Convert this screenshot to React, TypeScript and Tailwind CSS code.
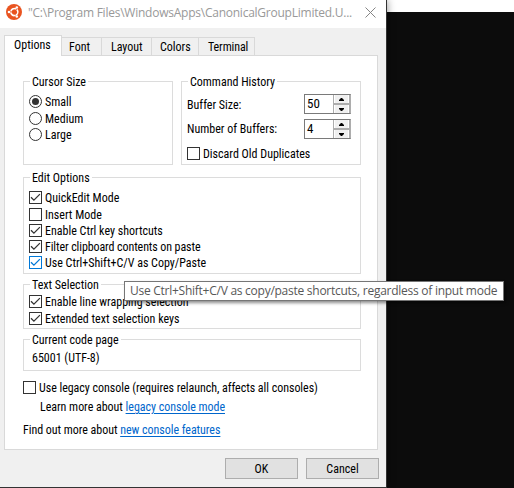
import React from "react";

function Box({ checked, active }: { checked?: boolean; active?: boolean }) {
  return (
    <span
      className={`flex h-[13px] w-[13px] shrink-0 items-center justify-center border bg-white ${
        active ? "border-[#0078d7] text-[#0078d7]" : "border-[#333333] text-[#333333]"
      }`}
    >
      {checked && (
        <svg width="11" height="11" viewBox="0 0 11 11" fill="none" stroke="currentColor" strokeWidth="1.3">
          <path d="M1 5.2 3.9 8.1 9.9 2.1" />
        </svg>
      )}
    </span>
  );
}

function Radio({ checked }: { checked?: boolean }) {
  return (
    <span className="flex h-[13px] w-[13px] shrink-0 items-center justify-center rounded-full border border-[#333333] bg-white">
      {checked && <span className="h-[7px] w-[7px] rounded-full bg-[#333333]" />}
    </span>
  );
}

function Row({ mark, label, className = "" }: { mark: React.ReactNode; label: string; className?: string }) {
  return (
    <div className={`flex h-[13px] items-center gap-[3px] ${className}`}>
      {mark}
      <span className="mt-[2px] whitespace-nowrap leading-[13px]">{label}</span>
    </div>
  );
}

function Group({ title, className, children }: { title: string; className: string; children: React.ReactNode }) {
  return (
    <section className={`flex flex-col border border-[#dcdcdc] pl-[5px] ${className}`}>
      <h2 className="-mt-[7px] mb-[5px] ml-[1px] h-[15px] self-start bg-white px-[2px] leading-[15px]">{title}</h2>
      {children}
    </section>
  );
}

function Spinner({ value }: { value: string }) {
  return (
    <div className="flex h-[20px] w-[47px] border border-[#7a7a7a] border-r-[#adadad] bg-white">
      <span className="flex-1 pl-[2px] text-[13px] leading-[18px]">{value}</span>
      <div className="flex w-[17px] flex-col gap-[2px] bg-[#adadad] px-px">
        <span className="flex flex-1 items-center justify-center border-x border-white bg-[#f0f0f0]">
          <svg width="5" height="3" viewBox="0 0 5 3"><path d="M0 3V2L2 0H3L5 2V3z" /></svg>
        </span>
        <span className="flex flex-1 items-center justify-center border-x border-white bg-[#f0f0f0]">
          <svg width="5" height="3" viewBox="0 0 5 3"><path d="M0 0V1L2 3H3L5 1V0z" /></svg>
        </span>
      </div>
    </div>
  );
}

function Tab({ label, className }: { label: string; className: string }) {
  return (
    <div className={`h-[18px] border-t border-r border-[#d9d9d9] bg-[#f0f0f0] leading-[18px] ${className}`}>{label}</div>
  );
}

export default function App() {
  return (
    <div className="relative h-[488px] w-[514px] overflow-hidden bg-white font-['Roboto_Condensed','Roboto',sans-serif] text-[12px] text-black">
      <div className="flex h-full">
        <main className="z-10 flex w-[387px] flex-col border-r border-b border-[#333333] bg-[#f0f0f0] shadow-[0_0_8px_rgba(0,0,0,0.45)]">
          <header className="flex h-[28px] shrink-0 items-center bg-white">
            <svg className="ml-[6px] -mt-[4px] shrink-0" width="16" height="16" viewBox="0 0 16 16">
              <circle cx="8" cy="8" r="8" fill="#e95420" />
              <circle cx="8.3" cy="8" r="3.5" fill="none" stroke="#fff" strokeWidth="1.6" strokeDasharray="6.33 1" strokeDashoffset="-0.5" transform="rotate(60 8.3 8)" />
              <circle cx="3" cy="8" r="1.3" fill="#fff" />
              <circle cx="10.8" cy="3.5" r="1.3" fill="#fff" />
              <circle cx="10.8" cy="12.5" r="1.3" fill="#fff" />
            </svg>
            <h1 className="-mt-[3px] ml-[6px] w-[331px] whitespace-nowrap font-['Open_Sans',sans-serif] text-[12px] tracking-[-0.24px] text-[#999999]">
              "C:\Program Files\WindowsApps\CanonicalGroupLimited.U...
            </h1>
            <svg className="-mt-[4px] ml-[6px] shrink-0" width="11" height="11" viewBox="0 0 11 11" stroke="#858585">
              <path d="M.5.5 10.5 10.5M10.5.5.5 10.5" />
            </svg>
          </header>

          <nav className="ml-[4px] mt-[7px] flex h-[20px] shrink-0 items-end">
            <div className="z-10 -mb-px h-[21px] w-[58px] self-start border border-b-0 border-[#d9d9d9] bg-white pl-[9px] leading-[19px]">Options</div>
            <Tab label="Font" className="w-[40px] pl-[7px]" />
            <Tab label="Layout" className="w-[50px] pl-[9px]" />
            <Tab label="Colors" className="w-[47px] pl-[8px]" />
            <Tab label="Terminal" className="w-[56px] pl-[9px] tracking-[-0.1px]" />
          </nav>

          <div className="ml-[4px] flex h-[395px] w-[374px] shrink-0 flex-col border border-[#d9d9d9] bg-white pl-[18px] pt-[25px]">
            <div className="flex gap-[8px]">
              <Group title="Cursor Size" className="h-[84px] w-[150px]">
                <Row mark={<Radio checked />} label="Small" />
                <Row mark={<Radio />} label="Medium" className="mt-[4px]" />
                <Row mark={<Radio />} label="Large" className="mt-[3px]" />
              </Group>
              <Group title="Command History" className="h-[84px] w-[180px]">
                <div className="-mt-px flex w-[164px] items-center justify-between">
                  <span className="mt-[2px]">Buffer Size:</span>
                  <Spinner value="50" />
                </div>
                <div className="mt-[5px] flex w-[164px] items-center justify-between">
                  <span>Number of Buffers:</span>
                  <Spinner value="4" />
                </div>
                <Row mark={<Box />} label="Discard Old Duplicates" className="mt-[8px]" />
              </Group>
            </div>

            <Group title="Edit Options" className="mt-[12px] h-[97px] w-[338px]">
              <Row mark={<Box checked />} label="QuickEdit Mode" />
              <Row mark={<Box />} label="Insert Mode" className="mt-[4px]" />
              <Row mark={<Box checked />} label="Enable Ctrl key shortcuts" className="mt-[3px]" />
              <Row mark={<Box checked />} label="Filter clipboard contents on paste" className="mt-[3px] tracking-[-0.1px]" />
              <Row mark={<Box checked active />} label="Use Ctrl+Shift+C/V as Copy/Paste" className="mt-[3px]" />
            </Group>

            <Group title="Text Selection" className="mt-[10px] h-[45px] w-[338px]">
              <Row mark={<Box checked />} label="Enable line wrapping selection" className="-mt-[3px]" />
              <Row mark={<Box checked />} label="Extended text selection keys" className="mt-[4px]" />
            </Group>

            <Group title="Current code page" className="mt-[10px] h-[32px] w-[338px]">
              <p className="-mt-px ml-[3px] leading-[13px]">65001 (UTF-8)</p>
            </Group>

            <Row mark={<Box />} label="Use legacy console (requires relaunch, affects all consoles)" className="mt-[10px] tracking-[-0.04px]" />
            <p className="ml-[17px] mt-[6px] h-[15px] leading-[15px] tracking-[-0.03px]">
              Learn more about <a className="text-[#0066cc] underline underline-offset-2">legacy console mode</a>
            </p>
            <p className="mt-[8px] h-[15px] leading-[15px] tracking-[-0.04px]">
              Find out more about <a className="text-[#0066cc] underline underline-offset-2">new console features</a>
            </p>
          </div>

          <footer className="ml-[225px] mt-[8px] flex gap-[8px]">
            <button className="h-[21px] w-[73px] border border-[#adadad] bg-[#e1e1e1]">OK</button>
            <button className="h-[21px] w-[73px] border border-[#adadad] bg-[#e1e1e1]">Cancel</button>
          </footer>
        </main>
        <div className="mt-[12px] flex-1 bg-[#0c0c0c]" />
      </div>

      <div className="absolute left-[124px] top-[281px] z-20 h-[20px] w-[380px] whitespace-nowrap border border-[#767676] bg-white pl-[5px] font-['Open_Sans',sans-serif] text-[12px] leading-[18px] tracking-[-0.26px] text-[#575757] shadow-[2px_2px_3px_rgba(0,0,0,0.45)]">
        Use Ctrl+Shift+C/V as copy/paste shortcuts, regardless of input mode
      </div>
    </div>
  );
}
